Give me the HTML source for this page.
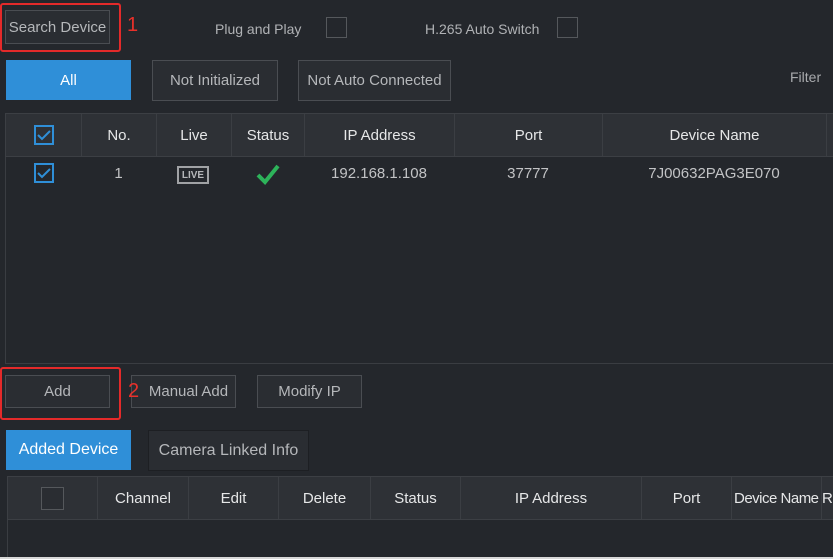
<!DOCTYPE html>
<html><head><style>
body{margin:0;width:833px;height:559px;background:#24272c;font-family:"Liberation Sans",sans-serif;color:#c8c9cb;position:relative;overflow:hidden}
.a{position:absolute;box-sizing:border-box}
.btn{border:1px solid #4a4d52;background:#2a2d32;color:#b5b7ba;font-size:15px;display:flex;align-items:center;justify-content:center;white-space:nowrap}
.blue{background:#2f8fd8;color:#fff;border:none}
.red{border:2px solid #e42a2a;border-radius:3px}
.hd{background:#2e3136;border-top:1px solid #3c3f44;border-bottom:1px solid #3c3f44}
.c{position:absolute;top:0;height:100%;display:flex;align-items:center;justify-content:center;font-size:15px;color:#e6e7e8;border-right:1px solid #3b3e43;box-sizing:border-box;white-space:nowrap}
.r{position:absolute;display:flex;align-items:center;justify-content:center;font-size:15px;color:#c2c3c5}
.cb{width:20px;height:20px;border:2px solid #2f8fd8;box-sizing:border-box;display:flex;align-items:center;justify-content:center}
.num{color:#e8302a;font-size:20px;z-index:5}
</style></head><body>
<div class="a btn" style="left:5px;top:10px;width:105px;height:34px;font-size:15px">Search Device</div>
<div class="a red" style="left:0;top:3px;width:121px;height:49px"></div>
<div class="a num" style="left:127px;top:14px">1</div>
<div class="a" style="left:215px;top:21px;font-size:14px;color:#b0b2b5">Plug and Play</div>
<div class="a" style="left:326px;top:17px;width:21px;height:21px;border:1px solid #55585c"></div>
<div class="a" style="left:425px;top:21px;font-size:14px;color:#b0b2b5">H.265 Auto Switch</div>
<div class="a" style="left:557px;top:17px;width:21px;height:21px;border:1px solid #55585c"></div>
<div class="a btn blue" style="left:6px;top:60px;width:125px;height:40px">All</div>
<div class="a btn" style="left:152px;top:60px;width:126px;height:41px">Not Initialized</div>
<div class="a btn" style="left:298px;top:60px;width:153px;height:41px">Not Auto Connected</div>
<div class="a" style="left:790px;top:69px;font-size:14px;color:#a8aaad">Filter</div>
<div class="a hd" style="left:5px;top:113px;width:828px;height:44px;border-left:1px solid #3c3f44">
<div class="c" style="left:0;width:76px"><div class="cb"><svg width="14" height="12"><path d="M1 6l4 4 8-8" stroke="#2f8fd8" stroke-width="2" fill="none"/></svg></div></div>
<div class="c" style="left:76px;width:75px">No.</div>
<div class="c" style="left:151px;width:75px">Live</div>
<div class="c" style="left:226px;width:73px">Status</div>
<div class="c" style="left:299px;width:150px">IP Address</div>
<div class="c" style="left:449px;width:148px">Port</div>
<div class="c" style="left:597px;width:224px">Device Name</div>
</div>
<div class="a" style="left:5px;top:157px;width:1px;height:207px;background:#3a3d42"></div>
<div class="a" style="left:5px;top:363px;width:828px;height:1px;background:#3a3d42"></div>
<div class="r" style="left:34px;top:163px;"><div class="cb"><svg width="14" height="12"><path d="M1 6l4 4 8-8" stroke="#2f8fd8" stroke-width="2" fill="none"/></svg></div></div>
<div class="r" style="left:81px;top:163px;width:75px;height:20px">1</div>
<div class="r" style="left:177px;top:166px;width:32px;height:18px;border:2px solid #a0a2a5;font-size:10px;font-weight:bold;color:#b5b7ba;box-sizing:border-box">LIVE</div>
<div class="r" style="left:256px;top:163px"><svg width="24" height="22"><path d="M2 12l7 7L22 3" stroke="#2db35a" stroke-width="4" fill="none"/></svg></div>
<div class="r" style="left:304px;top:163px;width:150px;height:20px">192.168.1.108</div>
<div class="r" style="left:454px;top:163px;width:148px;height:20px">37777</div>
<div class="r" style="left:602px;top:163px;width:224px;height:20px">7J00632PAG3E070</div>
<div class="a btn" style="left:5px;top:375px;width:105px;height:33px">Add</div>
<div class="a red" style="left:0;top:367px;width:121px;height:53px"></div>
<div class="a btn" style="left:131px;top:375px;width:105px;height:33px;padding-left:10px">Manual Add</div>
<div class="a num" style="left:128px;top:380px">2</div>
<div class="a btn" style="left:257px;top:375px;width:105px;height:33px">Modify IP</div>
<div class="a btn blue" style="left:6px;top:430px;width:125px;height:40px;font-size:16px">Added Device</div>
<div class="a btn" style="left:148px;top:430px;width:161px;height:41px;font-size:16px;border-color:#1d1f23">Camera Linked Info</div>
<div class="a hd" style="left:7px;top:476px;width:826px;height:44px;border-left:1px solid #3c3f44">
<div class="c" style="left:0;width:90px"><div style="width:21px;height:21px;border:1px solid #55585c;background:#2a2d32"></div></div>
<div class="c" style="left:90px;width:91px">Channel</div>
<div class="c" style="left:181px;width:90px">Edit</div>
<div class="c" style="left:271px;width:92px">Delete</div>
<div class="c" style="left:363px;width:90px">Status</div>
<div class="c" style="left:453px;width:181px">IP Address</div>
<div class="c" style="left:634px;width:90px">Port</div>
<div class="c" style="left:724px;width:90px;justify-content:flex-start;padding-left:2px;letter-spacing:-0.5px;overflow:hidden">Device Name</div>
<div class="c" style="left:814px;width:20px;justify-content:flex-start;border:none">R</div>
</div>
<div class="a" style="left:7px;top:520px;width:1px;height:38px;background:#3a3d42"></div>
<div class="a" style="left:0;top:557px;width:833px;height:2px;background:#d8d8d8"></div>
</body></html>
